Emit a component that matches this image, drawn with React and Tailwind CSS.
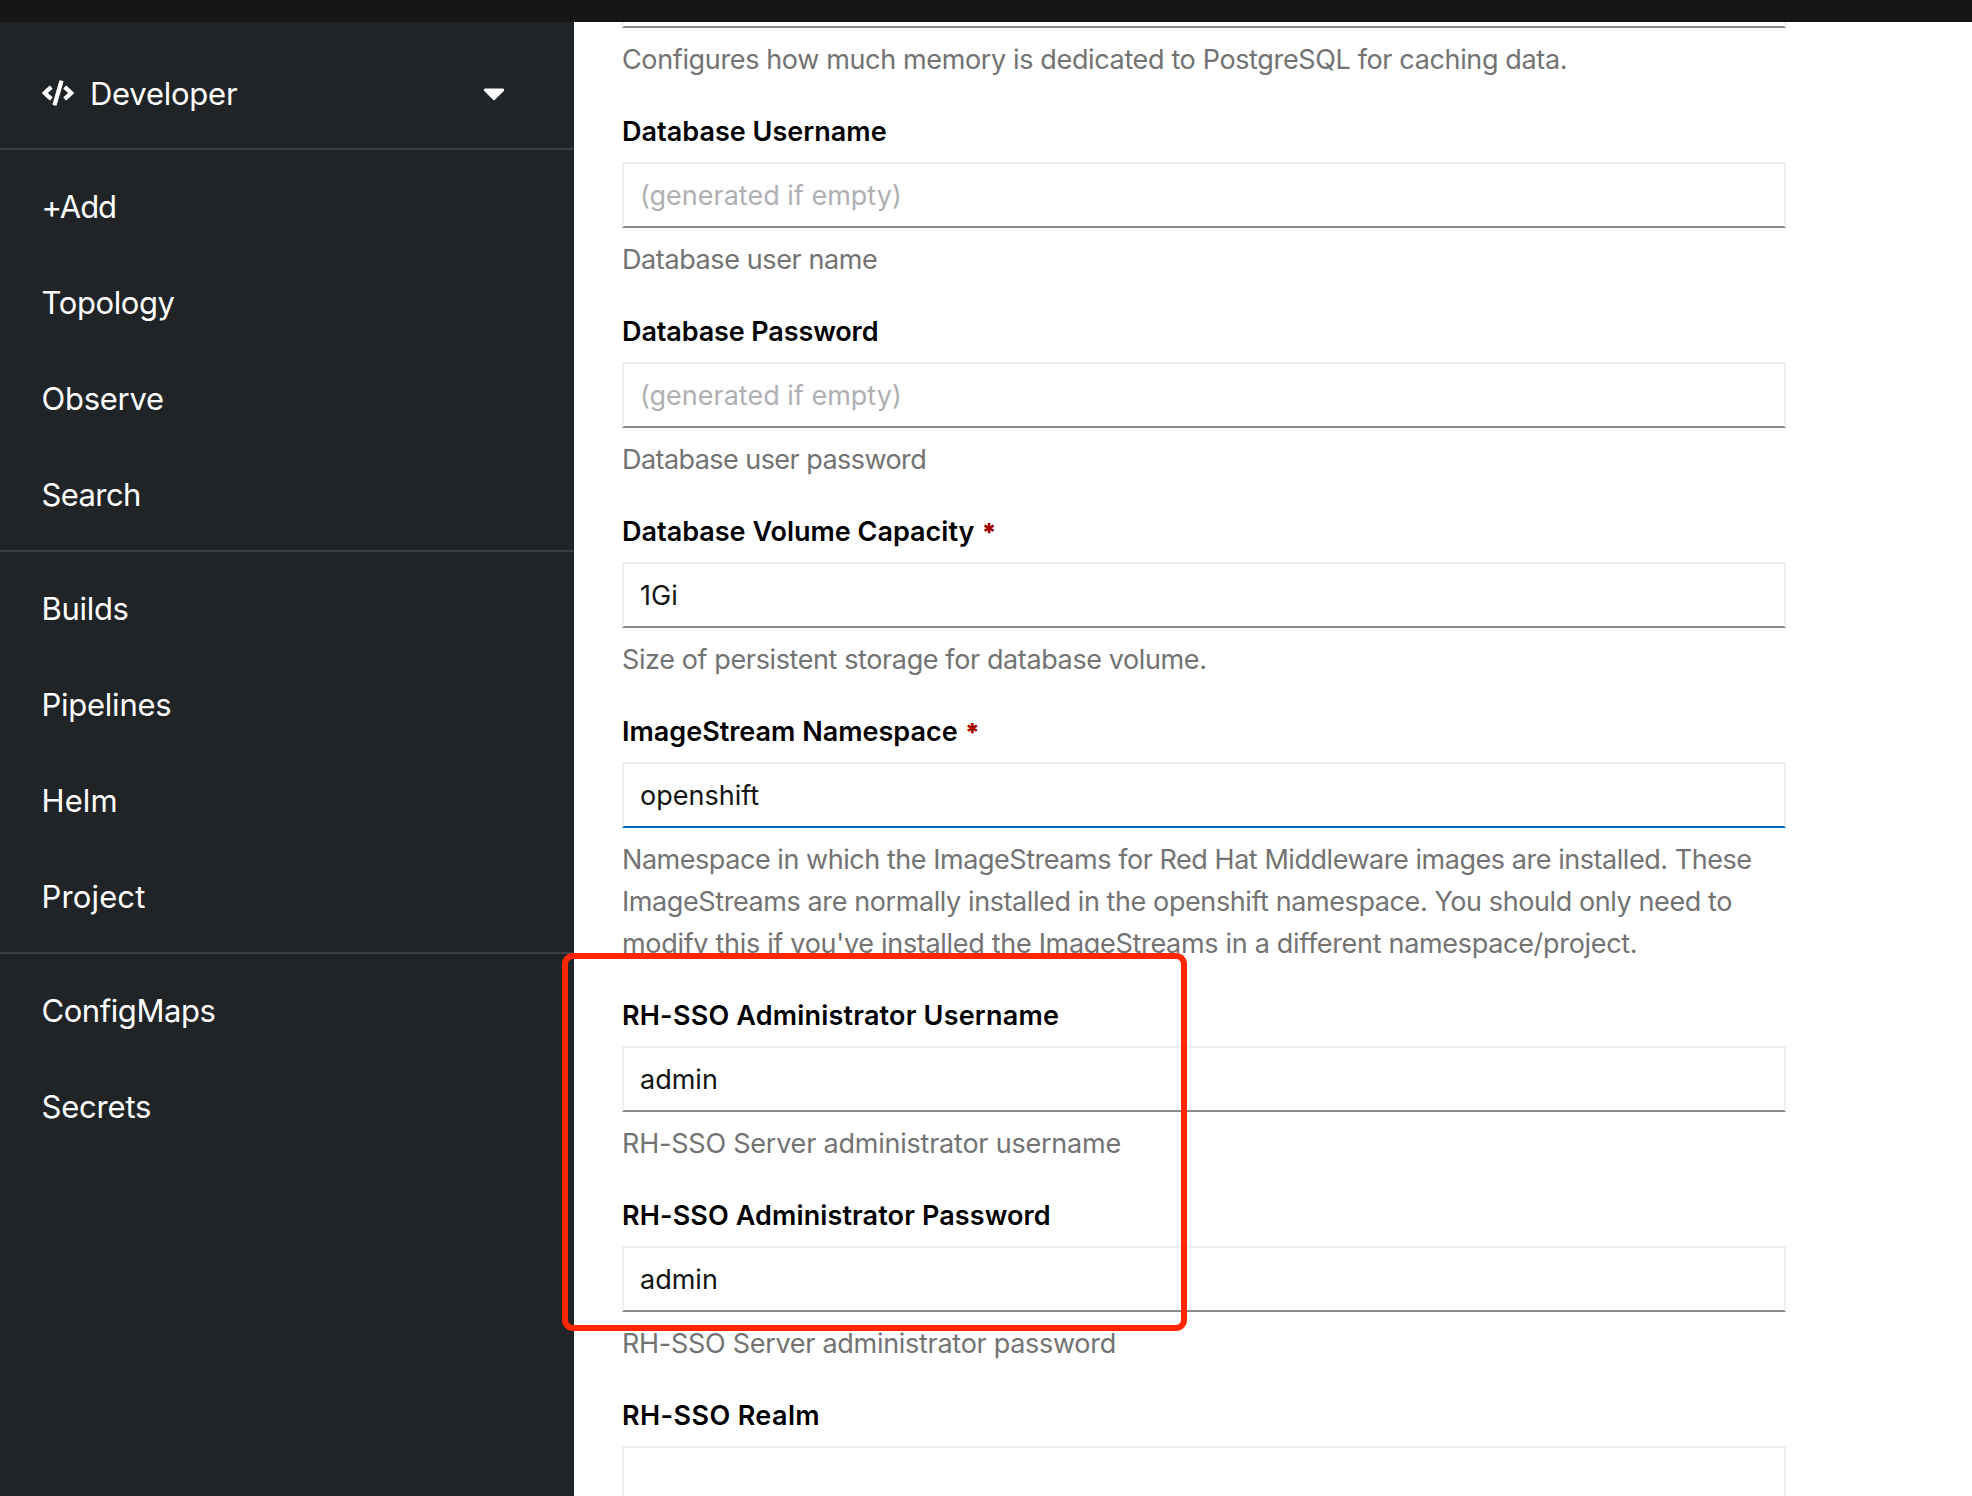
import React from 'react'
import { FaCode, FaCaretDown } from 'react-icons/fa'

const navGroups = [
  [
    { label: '+Add', cls: 'tracking-[-1.1px]' },
    { label: 'Topology', cls: 'tracking-[-0.4px]' },
    { label: 'Observe', cls: 'tracking-[-0.27px]' },
    { label: 'Search', cls: 'tracking-[-0.6px]' },
  ],
  [
    { label: 'Builds', cls: 'tracking-[-0.3px]' },
    { label: 'Pipelines', cls: 'tracking-[-0.25px]' },
    { label: 'Helm', cls: 'tracking-[0.1px]' },
    { label: 'Project', cls: 'tracking-[0.15px]' },
  ],
  [
    { label: 'ConfigMaps', cls: 'tracking-[-0.44px]' },
    { label: 'Secrets', cls: 'tracking-[-0.2px]' },
  ],
]

const fields = [
  {
    label: 'Database Username',
    labelCls: 'tracking-[0.02px]',
    placeholder: '(generated if empty)',
    help: [{ text: 'Database user name', cls: 'tracking-[-0.4px]' }],
  },
  {
    label: 'Database Password',
    labelCls: 'tracking-[-0.12px]',
    placeholder: '(generated if empty)',
    help: [{ text: 'Database user password', cls: 'tracking-[-0.56px]' }],
  },
  {
    label: 'Database Volume Capacity',
    labelCls: 'tracking-[0px]',
    required: true,
    value: '1Gi',
    help: [{ text: 'Size of persistent storage for database volume.', cls: 'tracking-[-0.39px]' }],
  },
  {
    label: 'ImageStream Namespace',
    labelCls: 'tracking-[0px]',
    required: true,
    focused: true,
    value: 'openshift',
    help: [
      {
        text: 'Namespace in which the ImageStreams for Red Hat Middleware images are installed. These',
        cls: 'tracking-[-0.455px]',
      },
      {
        text: 'ImageStreams are normally installed in the openshift namespace. You should only need to',
        cls: 'tracking-[-0.408px]',
      },
      {
        text: "modify this if you've installed the ImageStreams in a different namespace/project.",
        cls: 'tracking-[-0.31px]',
      },
    ],
  },
  {
    label: 'RH-SSO Administrator Username',
    labelCls: 'tracking-[0.19px]',
    value: 'admin',
    help: [{ text: 'RH-SSO Server administrator username', cls: 'tracking-[-0.22px]' }],
  },
  {
    label: 'RH-SSO Administrator Password',
    labelCls: 'tracking-[0.11px]',
    value: 'admin',
    help: [{ text: 'RH-SSO Server administrator password', cls: 'tracking-[-0.29px]' }],
  },
  { label: 'RH-SSO Realm', labelCls: 'tracking-[0.39px]', value: '', help: [] },
]

function Sidebar() {
  return (
    <nav className="w-[574px] shrink-0 bg-[#212427] text-[31px] text-white">
      <button className="flex h-[126px] w-full items-center pl-[42px] pr-[69px] pb-[1px] pt-[19px]">
        <FaCode className="h-[26px] w-8 -translate-y-[1px]" />
        <span className="ml-[16px] leading-[48px] tracking-[-0.25px]">Developer</span>
        <FaCaretDown className="ml-auto h-9 w-[22px] -translate-y-[1px]" />
      </button>
      {navGroups.map((group, i) => (
        <ul key={i} className="border-t-2 border-[#3c3f42] py-2">
          {group.map((item) => (
            <li key={item.label} className="flex h-24 items-center pl-[41.5px] pt-[3px]">
              <a className={item.cls}>{item.label}</a>
            </li>
          ))}
        </ul>
      ))}
    </nav>
  )
}

function Help({ lines }) {
  return (
    <div className="mb-[-1px] mt-[11px] leading-[42px] text-[#737373]">
      {lines.map((line) => (
        <p key={line.text} className={`whitespace-nowrap ${line.cls}`}>
          {line.text}
        </p>
      ))}
    </div>
  )
}

function Field({ field }) {
  return (
    <div className="mb-[30px]">
      <label className="mb-[9px] flex h-[43px] pt-[1px] font-semibold leading-[42px] text-black">
        <span className={field.labelCls}>{field.label}</span>
        {field.required && (
          <span className="ml-[7px] text-[25px] font-black leading-[43px] text-[#a30000]">*</span>
        )}
      </label>
      <input
        type="text"
        defaultValue={field.value}
        placeholder={field.placeholder}
        className={`block h-[66px] w-full border-2 border-[#f0f0f0] bg-white px-4 text-[#151515] outline-none placeholder:text-[#b0b0b4] ${
          field.focused ? 'border-b-[#0066cc]' : 'border-b-[#8a8d90]'
        }`}
      />
      <Help lines={field.help} />
    </div>
  )
}

export default function App() {
  return (
    <div className="relative flex h-[1496px] w-[1972px] flex-col overflow-hidden bg-white font-['Inter',sans-serif]">
      <header className="h-[22px] shrink-0 bg-[#151515]" />
      <div className="flex min-h-0 flex-1">
        <Sidebar />
        <main className="flex min-w-0 flex-1 overflow-hidden pl-12 text-[27px]">
          <form className="w-[1164px]">
            <div className="mb-[30px]">
              <div className="h-[6px] border-x-2 border-b-2 border-[#f0f0f0] border-b-[#8a8d90]" />
              <Help
                lines={[
                  {
                    text: 'Configures how much memory is dedicated to PostgreSQL for caching data.',
                    cls: 'tracking-[-0.36px]',
                  },
                ]}
              />
            </div>
            {fields.map((field) => (
              <Field key={field.label} field={field} />
            ))}
          </form>
        </main>
      </div>
      {/* Highlight around the administrator credentials */}
      <div className="pointer-events-none absolute left-[562px] top-[953px] h-[378px] w-[625px] rounded-[11px] border-[6px] border-[#ff2600]" />
    </div>
  )
}
